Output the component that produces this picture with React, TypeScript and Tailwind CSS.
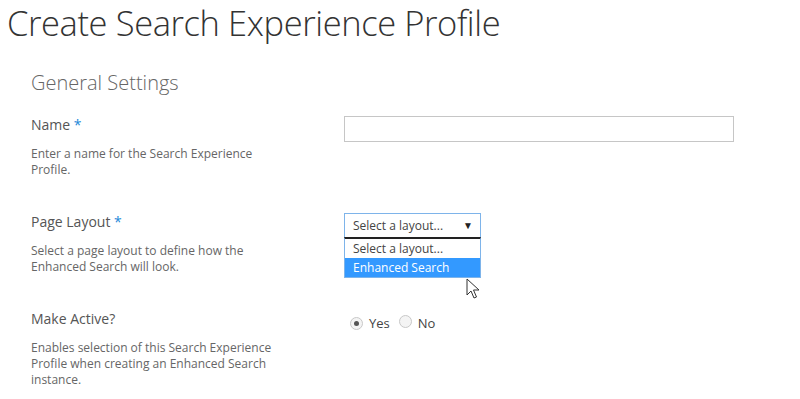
const FONT = "font-['Open_Sans','Liberation_Sans',sans-serif]"

function Required() {
  return <span className="text-[#2488d8]"> *</span>
}

function Radio({ checked }: { checked?: boolean }) {
  return (
    <span className="inline-flex w-[13px] h-[13px] rounded-full border border-[#c8c8c8] bg-[#f4f4f4] items-center justify-center">
      {checked && <span className="w-[5px] h-[5px] rounded-full bg-[#555]" />}
    </span>
  )
}

function Cursor() {
  return (
    <svg width="14" height="22" viewBox="0 0 14 22" className="absolute left-[466px] top-[278px]">
      <path
        d="M1 1 L1 17 L5 13 L8 20 L10.5 19 L7.5 12 L13 12 Z"
        fill="#fff"
        stroke="#333"
        strokeWidth="1"
        strokeLinejoin="round"
      />
    </svg>
  )
}

export default function App() {
  return (
    <div className={`${FONT} relative w-[800px] h-[399px] bg-white overflow-hidden`}>
      {/* Page title */}
      <h1 className="pl-[7px] pt-[1px] text-[34.5px] leading-[44px] font-light text-[#333] tracking-[-0.4px] whitespace-nowrap">
        Create Search Experience Profile
      </h1>

      <div className="pl-[31px]">
        <h2 className="mt-[24px] text-[20px] leading-[28px] font-light text-[#666]">General Settings</h2>

        {/* Name */}
        <div className="flex mt-[19px]">
          <div className="w-[313px]">
            <p className="text-[14px] leading-[18px] text-[#555]">Name<Required /></p>
            <p className="mt-[12px] w-[245px] text-[12px] leading-[16px] text-[#666]">
              Enter a name for the Search Experience Profile.
            </p>
          </div>
          <div>
            <div className="w-[390px] h-[26px] border border-[#c6c6c6] bg-white" />
          </div>
        </div>

        {/* Page Layout */}
        <div className="flex mt-[35px]">
          <div className="w-[313px]">
            <p className="text-[14px] leading-[18px] text-[#555]">Page Layout<Required /></p>
            <p className="mt-[12px] w-[245px] text-[12px] leading-[16px] text-[#666]">
              Select a page layout to define how the Enhanced Search will look.
            </p>
          </div>
          <div className="relative">
            <div className="w-[137px] h-[25px] border border-[#7eb4ea] flex items-center justify-between pl-[8px] pr-[7px] text-[12px] text-[#444]">
              <span>Select a layout...</span>
              <span className="text-[10px] text-[#222]">▼</span>
            </div>
            <div className="absolute left-0 top-[24px] w-[137px] border-t-2 border-t-[#222] border-x border-b border-x-[#7eb4ea] border-b-[#7eb4ea] bg-white text-[12px]">
              <div className="h-[19px] leading-[19px] pl-[8px] text-[#444]">Select a layout...</div>
              <div className="h-[19px] leading-[19px] pl-[8px] bg-[#3399ff] text-white">Enhanced Search</div>
            </div>
          </div>
        </div>

        {/* Make Active */}
        <div className="flex mt-[35px]">
          <div className="w-[313px]">
            <p className="text-[14px] leading-[18px] text-[#555]">Make Active?</p>
            <p className="mt-[12px] w-[265px] text-[12px] leading-[16px] text-[#666]">
              Enables selection of this Search Experience Profile when creating an Enhanced Search instance.
            </p>
          </div>
          <div className="flex items-center pl-[6px] pt-[5px] h-[22px] text-[13px] text-[#444]">
            <Radio checked />
            <span className="ml-[6px]">Yes</span>
            <span className="ml-[9px]"><Radio /></span>
            <span className="ml-[6px]">No</span>
          </div>
        </div>
      </div>

      <Cursor />
    </div>
  )
}
